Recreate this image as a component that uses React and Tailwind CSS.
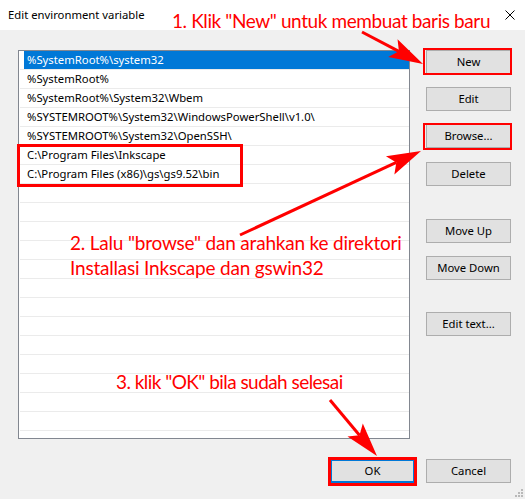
import React from 'react';

const rows = [
  '%SystemRoot%\\system32',
  '%SystemRoot%',
  '%SystemRoot%\\System32\\Wbem',
  '%SYSTEMROOT%\\System32\\WindowsPowerShell\\v1.0\\',
  '%SYSTEMROOT%\\System32\\OpenSSH\\',
  'C:\\Program Files\\Inkscape',
  'C:\\Program Files (x86)\\gs\\gs9.52\\bin',
];

const sideButtons = [
  { label: 'New', cls: '' },
  { label: 'Edit', cls: 'mt-[13px]' },
  { label: 'Browse...', cls: 'mt-[13px]' },
  { label: 'Delete', cls: 'mt-[14px]' },
  { label: 'Move Up', cls: 'mt-[33px]' },
  { label: 'Move Down', cls: 'mt-[13px]' },
  { label: 'Edit text...', cls: 'mt-[32px]' },
];

// red arrow like the ones a screenshot tool draws
const Arrow = ({ x1, y1, x2, y2, len = 34, hw = 10 }) => {
  const dx = x2 - x1;
  const dy = y2 - y1;
  const d = Math.hypot(dx, dy);
  const ux = dx / d;
  const uy = dy / d;
  const bx = x2 - ux * len;
  const by = y2 - uy * len;
  const nx = x2 - ux * len * 0.8;
  const ny = y2 - uy * len * 0.8;
  const pts = [
    [x2, y2],
    [bx - uy * hw, by + ux * hw],
    [nx, ny],
    [bx + uy * hw, by - ux * hw],
  ]
    .map((p) => p.join(','))
    .join(' ');
  return (
    <g>
      <line x1={x1} y1={y1} x2={nx} y2={ny} stroke="#ff0000" strokeWidth="3" />
      <polygon points={pts} fill="#ff0000" />
    </g>
  );
};

const Btn = ({ label, className = '', isDefault }) => (
  <button
    className={`h-6 w-[85px] bg-[#e1e1e1] text-[11.3px] text-black ${
      isDefault ? 'border-2 border-[#0078d7]' : 'border border-[#adadad]'
    } ${className}`}
  >
    {label}
  </button>
);

export default function App() {
  return (
    <div
      className="relative w-[525px] h-[499px] overflow-hidden bg-[#f0f0f0] text-black"
      style={{ fontFamily: '"Noto Sans", "Open Sans", sans-serif' }}
    >
      {/* title bar */}
      <div className="h-[30px] bg-white flex items-center justify-between pl-2 pr-[10px]">
        <span className="text-[11.3px] leading-none">Edit environment variable</span>
        <svg width="10" height="10" viewBox="0 0 10 10">
          <path d="M0.5 0.5 L9.5 9.5 M9.5 0.5 L0.5 9.5" stroke="#000" strokeWidth="1" />
        </svg>
      </div>

      <div className="flex pl-[18px] pt-5">
        <div className="w-[392px] h-[389px] border border-[#828790] bg-white pl-px overflow-hidden">
          {Array.from({ length: 20 }).map((_, i) => (
            <div key={i} className="h-[19px] border-b border-[#ebebeb] flex">
              <div
                className={`flex-1 ml-[4px] pl-[3px] text-[11.3px] leading-[18px] whitespace-nowrap ${
                  i === 0 ? 'bg-[#0078d7] text-white' : ''
                }`}
              >
                {rows[i] || ''}
              </div>
            </div>
          ))}
        </div>
        <div className="ml-4 flex flex-col">
          {sideButtons.map((b) => (
            <Btn key={b.label} label={b.label} className={b.cls} />
          ))}
        </div>
      </div>

      <div className="flex justify-end gap-[11px] pr-[14px] mt-5">
        <Btn label="OK" isDefault />
        <Btn label="Cancel" />
      </div>

      {/* resize grip */}
      <svg className="absolute right-[2px] bottom-[2px]" width="8" height="8" viewBox="0 0 8 8">
        {[
          [6, 0], [6, 3], [3, 3], [6, 6], [3, 6], [0, 6],
        ].map(([x, y]) => (
          <rect key={`${x}-${y}`} x={x} y={y} width="2" height="2" fill="#b9b9b9" />
        ))}
      </svg>

      {/* annotations */}
      <svg className="absolute inset-0 pointer-events-none" width="525" height="499">
        <rect x="18.5" y="145.5" width="223" height="40" fill="none" stroke="#ff0000" strokeWidth="3" />
        <rect x="424" y="49" width="87" height="25" fill="none" stroke="#ff0000" strokeWidth="2" />
        <rect x="424" y="124" width="87" height="25" fill="none" stroke="#ff0000" strokeWidth="2" />
        <rect x="329.5" y="458.5" width="86" height="26" fill="none" stroke="#ff0000" strokeWidth="3" />
        <Arrow x1={362} y1={32} x2={423} y2={64} />
        <Arrow x1={240} y1={235} x2={421} y2={151} />
        <Arrow x1={330} y1={400} x2={377} y2={456} />
      </svg>

      <div
        className="absolute inset-0 pointer-events-none text-[#ff0000] text-[19px] leading-[25px] tracking-[-0.4px]"
        style={{ fontFamily: 'Lato, "Noto Sans", sans-serif' }}
      >
        <div className="absolute left-[172px] top-[8px] whitespace-nowrap">
          1. Klik "New" untuk membuat baris baru
        </div>
        <div className="absolute left-[70px] top-[230px] whitespace-nowrap tracking-[-0.2px]">
          2. Lalu "browse" dan arahkan ke direktori
          <br />
          Installasi Inkscape dan gswin32
        </div>
        <div className="absolute left-[116px] top-[369px] whitespace-nowrap tracking-[-0.55px]">
          3. klik "OK" bila sudah selesai
        </div>
      </div>
    </div>
  );
}
